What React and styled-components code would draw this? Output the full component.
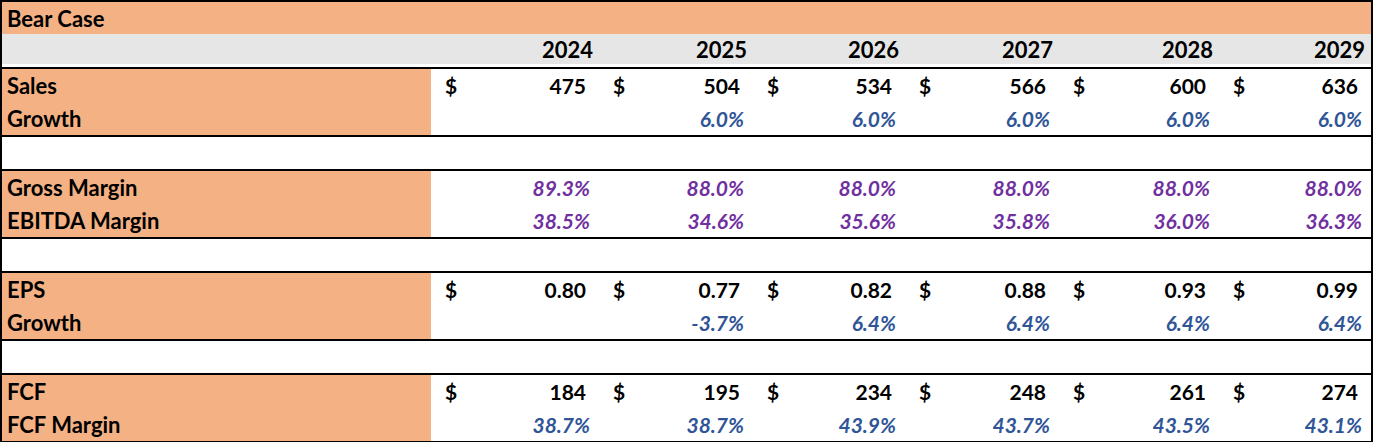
import React from "react";
import styled, { createGlobalStyle } from "styled-components";

const ORANGE = "#F4B183";
const GREY = "#E7E6E6";
const BLUE = "#2F5597";
const PURPLE = "#7030A0";
const COLS = "429px 168px 154px 152px 154px 160px 152px";

const years = [2024, 2025, 2026, 2027, 2028, 2029];

const sections = [
  [
    { label: "Sales", dollar: true, values: ["475", "504", "534", "566", "600", "636"] },
    { label: "Growth", tone: "blue", values: ["", "6.0%", "6.0%", "6.0%", "6.0%", "6.0%"] },
  ],
  [
    { label: "Gross Margin", tone: "purple", values: ["89.3%", "88.0%", "88.0%", "88.0%", "88.0%", "88.0%"] },
    { label: "EBITDA Margin", tone: "purple", values: ["38.5%", "34.6%", "35.6%", "35.8%", "36.0%", "36.3%"] },
  ],
  [
    { label: "EPS", dollar: true, values: ["0.80", "0.77", "0.82", "0.88", "0.93", "0.99"] },
    { label: "Growth", tone: "blue", values: ["", "-3.7%", "6.4%", "6.4%", "6.4%", "6.4%"] },
  ],
  [
    { label: "FCF", dollar: true, values: ["184", "195", "234", "248", "261", "274"] },
    { label: "FCF Margin", tone: "blue", values: ["38.7%", "38.7%", "43.9%", "43.7%", "43.5%", "43.1%"] },
  ],
];

function App() {
  return (
    <>
      <GlobalStyle />
      <Sheet>
        <TitleRow>Bear Case</TitleRow>
        <HeaderRow>
          <span />
          {years.map((y) => (
            <Year key={y}>{y}</Year>
          ))}
        </HeaderRow>
        {sections.map((rows, i) => (
          <React.Fragment key={i}>
            {i > 0 && <Spacer />}
            <Section>
              {rows.map((row) => (
                <Row key={row.label}>
                  <Label>{row.label}</Label>
                  {row.values.map((v, j) => (
                    <Cell key={j} $pct={!!row.tone}>
                      <span>{row.dollar ? "$" : ""}</span>
                      <Value $tone={row.tone}>{v}</Value>
                    </Cell>
                  ))}
                </Row>
              ))}
            </Section>
          </React.Fragment>
        ))}
      </Sheet>
    </>
  );
}

export default App;

const GlobalStyle = createGlobalStyle`
  body {
    margin: 0;
    background: #fff;
    font-family: Lato, "Open Sans", sans-serif;
    font-weight: 700;
    font-size: 21px;
    color: #000;
  }
`;

const Sheet = styled.div`
  width: 1373px;
  box-sizing: border-box;
  border: 2px solid #000;
`;

const TitleRow = styled.div`
  height: 32px;
  display: flex;
  align-items: center;
  padding-left: 5px;
  font-size: 22px;
  background: ${ORANGE};
`;

const HeaderRow = styled.div`
  display: grid;
  grid-template-columns: ${COLS};
  height: 30px;
  align-items: center;
  background: ${GREY};
  border-bottom: 3px solid #fff;
`;

const Year = styled.div`
  text-align: right;
  padding-right: 6px;
  font-size: 22px;
`;

const Section = styled.div`
  border-top: 2px solid #000;
`;

const Spacer = styled.div`
  height: 32px;
  border-top: 2px solid #000;
`;

const Row = styled.div`
  display: grid;
  grid-template-columns: ${COLS};
  height: 33px;
`;

const Label = styled.div`
  display: flex;
  align-items: center;
  padding-left: 5px;
  font-size: 22px;
  background: ${ORANGE};
`;

const Cell = styled.div`
  display: flex;
  align-items: center;
  justify-content: space-between;
  padding: 0 ${(p) => (p.$pct ? 9 : 13)}px 0 14px;
`;

const Value = styled.span`
  font-style: ${(p) => (p.$tone ? "italic" : "normal")};
  color: ${(p) =>
    p.$tone === "blue" ? BLUE : p.$tone === "purple" ? PURPLE : "#000"};
`;
